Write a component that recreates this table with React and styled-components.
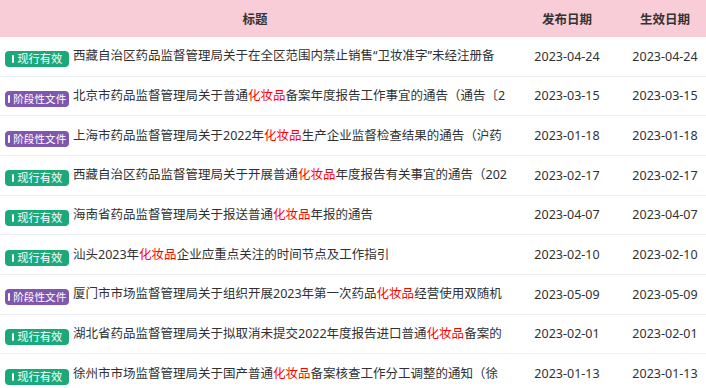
import React from 'react';
import styled, { createGlobalStyle } from 'styled-components';

const GlobalStyle = createGlobalStyle`
  body {
    margin: 0;
    background: #fff;
    font-family: "Noto Sans", "Noto Sans CJK SC", sans-serif;
  }
`;

const Table = styled.div`
  width: 706px;
  height: 388px;
  overflow: hidden;
  color: #303133;
`;

const HeaderRow = styled.div`
  display: grid;
  grid-template-columns: 510px 114px 82px;
  height: 37px;
  align-items: center;
  background: #f9cdd7;
`;

const HeadCell = styled.div`
  text-align: center;
  font-size: 12.5px;
  font-weight: 700;
  color: #333;
`;

const Row = styled.div`
  display: grid;
  grid-template-columns: 510px 114px 82px;
  height: 39.67px;
  box-sizing: border-box;
  align-items: center;
  border-bottom: 1px solid #ebeef5;
`;

const TitleCell = styled.div`
  display: flex;
  align-items: center;
  gap: 4px;
  padding: 0 5px;
  min-width: 0;
`;

const Badge = styled.span`
  flex: 0 0 64px;
  height: 16px;
  margin-top: 6px;
  border-radius: 4px;
  background: ${({ $kind }) => ($kind === 'stage' ? '#7f57ae' : '#1ba97a')};
  color: #fff;
  font-size: ${({ $kind }) => ($kind === 'stage' ? '10.6px' : '11.3px')};
  display: flex;
  align-items: center;
  justify-content: center;
  gap: 3px;
  line-height: 16px;
  white-space: nowrap;

  &::before {
    content: '';
    width: 2.5px;
    height: 8px;
    border-radius: 1px;
    background: #fff;
  }
`;

const TitleText = styled.div`
  flex: 1;
  min-width: 0;
  line-height: 18px;
  font-size: 12.5px;
  white-space: nowrap;
`;

const Mark = styled.span`
  color: #ff0000;
`;

const DateCell = styled.div`
  text-align: center;
  font-size: 12.5px;
`;

const rows = [
  { kind: 'valid', pre: '西藏自治区药品监督管理局关于在全区范围内禁止销售“卫妆准字”未经注册备', pub: '2023-04-24', eff: '2023-04-24' },
  { kind: 'stage', pre: '北京市药品监督管理局关于普通', post: '备案年度报告工作事宜的通告（通告〔2', pub: '2023-03-15', eff: '2023-03-15' },
  { kind: 'stage', pre: '上海市药品监督管理局关于2022年', post: '生产企业监督检查结果的通告（沪药', pub: '2023-01-18', eff: '2023-01-18' },
  { kind: 'valid', pre: '西藏自治区药品监督管理局关于开展普通', post: '年度报告有关事宜的通告（202', pub: '2023-02-17', eff: '2023-02-17' },
  { kind: 'valid', pre: '海南省药品监督管理局关于报送普通', post: '年报的通告', pub: '2023-04-07', eff: '2023-04-07' },
  { kind: 'valid', pre: '汕头2023年', post: '企业应重点关注的时间节点及工作指引', pub: '2023-02-10', eff: '2023-02-10' },
  { kind: 'stage', pre: '厦门市市场监督管理局关于组织开展2023年第一次药品', post: '经营使用双随机', pub: '2023-05-09', eff: '2023-05-09' },
  { kind: 'valid', pre: '湖北省药品监督管理局关于拟取消未提交2022年度报告进口普通', post: '备案的', pub: '2023-02-01', eff: '2023-02-01' },
  { kind: 'valid', pre: '徐州市市场监督管理局关于国产普通', post: '备案核查工作分工调整的通知（徐', pub: '2023-01-13', eff: '2023-01-13' },
];

export default function App() {
  return (
    <>
      <GlobalStyle />
      <Table>
        <HeaderRow>
          <HeadCell>标题</HeadCell>
          <HeadCell>发布日期</HeadCell>
          <HeadCell>生效日期</HeadCell>
        </HeaderRow>
        {rows.map((r, i) => (
          <Row key={i}>
            <TitleCell>
              <Badge $kind={r.kind}>{r.kind === 'stage' ? '阶段性文件' : '现行有效'}</Badge>
              <TitleText>
                {r.pre}
                {r.post !== undefined && <Mark>化妆品</Mark>}
                {r.post}
              </TitleText>
            </TitleCell>
            <DateCell>{r.pub}</DateCell>
            <DateCell>{r.eff}</DateCell>
          </Row>
        ))}
      </Table>
    </>
  );
}
